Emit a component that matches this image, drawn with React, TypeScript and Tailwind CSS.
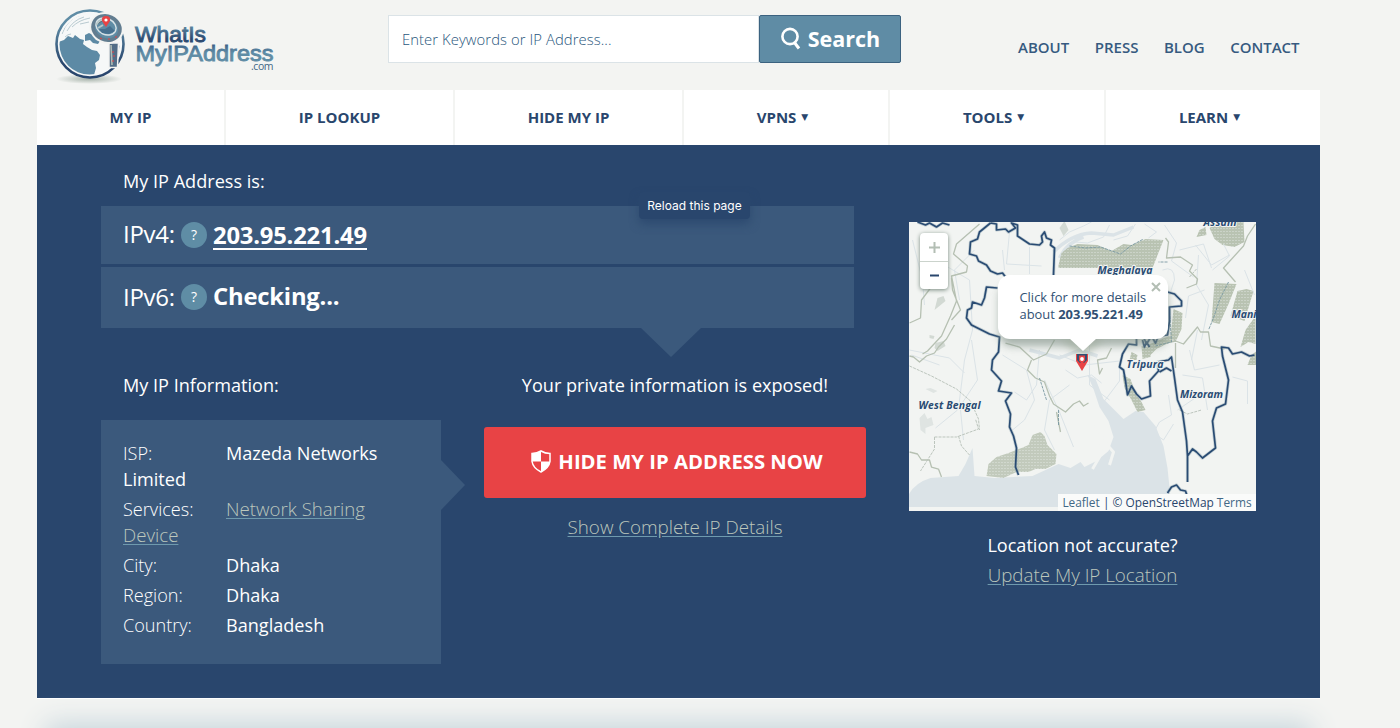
import React from "react";

const nav = [
  { label: "MY IP", cls: "w-[189px]" },
  { label: "IP LOOKUP", cls: "w-[229px]" },
  { label: "HIDE MY IP", cls: "w-[229px]" },
  { label: "VPNS", cls: "w-[206px]", arrow: true },
  { label: "TOOLS", cls: "w-[216px]", arrow: true },
  { label: "LEARN", cls: "w-[214px]", arrow: true },
];

const BORDERS = [
  "M918 222l8 3 4-2 7 4 6-4 7 2M991 223l-11 9-2 7-7 3-1 12 7 2 2 5 8 4 4 6 7 3 5-1 3 4",
  "M991 223l6 1 0 6 9-1 3 3 7-4-4-5 6 2 0 11 12 8 10 1 3-3-1-6 3-4 2 6 5 2-1 5 4 3-1 27M998 288l-11-1-2 11-3 7-9-3-1 6-4 2-1 8 5 7 18 9 10 3-1 15-6 8-1 10 10 11-3 10 13 2-6 8 5 13-1 13 4 9 3 12-1 19 3 8",
  "M1168 292l7 2 7 7 0 5-12 1v14l-2 14-9 1-3 7-4-7-5 8-3-7-7 1v7l-8-1-6 10-3 13 4 3 2 11 2 14 4-9 5 8 5 5 9-3-1-15 9-10-1-9 11-2 3-3 3 21 3 22 5 12 4 29 1 15v26",
  "M1188 456l5-7 4 3 6 6 13-10-3-27 4-13 9-4 3-24-6-24-1-9 7 1 4 6 9-2 8 4 5-1M1168 493l4-6 5-2 4 5 5 1 2 6",
  "M1143 340l2 7 2-5 3 5M1160 372l7-4 5 3",
].join("");

function Logo() {
  return (
    <svg width="240" height="90" viewBox="40 0 240 90" className="block" fontFamily="'Liberation Sans', Arial, sans-serif">
      <defs>
        <linearGradient id="ring" x1="0" y1="0" x2="0" y2="1">
          <stop offset="0.2" stopColor="#5f8ca5" />
          <stop offset="0.8" stopColor="#29466d" />
        </linearGradient>
        <linearGradient id="dark" gradientUnits="userSpaceOnUse" x1="0" y1="25" x2="0" y2="42">
          <stop offset="0" stopColor="#5f8ca5" />
          <stop offset="0.8" stopColor="#2b4a71" />
        </linearGradient>
        <linearGradient id="light" gradientUnits="userSpaceOnUse" x1="0" y1="44" x2="0" y2="62">
          <stop offset="0" stopColor="#3b5f86" />
          <stop offset="0.5" stopColor="#5f8ca5" />
        </linearGradient>
        <radialGradient id="shade">
          <stop offset="0" stopColor="#a9b5ac" />
          <stop offset="1" stopColor="#f3f4f2" />
        </radialGradient>
        <clipPath id="ball"><circle cx="89.500" cy="44.500" r="30" /></clipPath>
      </defs>
      <ellipse cx="89" cy="79" rx="33" ry="5" fill="url(#shade)" />
      <circle cx="90" cy="44" r="33.500" fill="#f6f8f8" stroke="url(#ring)" strokeWidth="2.600" />
      <g clipPath="url(#ball)">
        <path d="M58 42l6-2 4-4 5 2 2-3 5 4 4 1-1 4 4 3 5 3 5 1 3 4-1 5-4 3 1 5-2 7 1 6-37-3z" fill="#5d8aa5" />
        <path d="M85 35l4-2 4 2 3 5 4 1-2 3-5-1-3-3-5 1z" fill="#5d8aa5" />
        <path d="M113 42l7 4v18l-8 8-1-12z" fill="#5d8aa5" />
        <path d="M62 34q5-15 19-19M67 31q6-11 17-14M72 27q7-7 18-9M65 37q3-3 6-3M80 24l9-2" stroke="#b8cad0" strokeWidth="1" fill="none" />
      </g>
      <path d="M109 43h9.500l-1 24.500h-8.500z" fill="#526d87" stroke="#f3f4f2" strokeWidth="1.500" />
      <path d="M111 45l1 20" stroke="#aebbb4" strokeWidth="1.600" />
      <ellipse cx="106.500" cy="28" rx="17.500" ry="15.500" transform="rotate(25 106.500 28)" fill="#f3f4f2" />
      <ellipse cx="106.500" cy="28" rx="13.800" ry="11.800" transform="rotate(25 106.500 28)" fill="#5f8ca5" stroke="#627d90" strokeWidth="3.600" />
      <ellipse cx="106" cy="26.500" rx="10.500" ry="8" transform="rotate(25 106 26.500)" fill="none" stroke="#d9e3e7" strokeWidth="1.500" />
      <path d="M99 29l6 0 5-3 5 5-6 3-7-1z" fill="#47708f" />
      <path d="M96 25q3-5 9-6M98 28l5-3" stroke="#b7c7c8" strokeWidth="2" />
      <path d="M106 27l-4-6q-1-5 4-5t4 5z" fill="#e84345" />
      <circle cx="106" cy="20" r="1.600" fill="#fff" />
      <path d="M113 51v2m1 2v2m-1 3v2M100 38l2 1m6 0h2m5-2h2" stroke="#e84345" strokeWidth="1" />
      <g fontSize="22.800" strokeWidth="0.900">
        <text x="135" y="41.500" textLength="71" lengthAdjust="spacingAndGlyphs" fill="url(#dark)" stroke="url(#dark)">WhatIs</text>
        <text x="135.500" y="61" textLength="138" lengthAdjust="spacingAndGlyphs" fill="url(#light)" stroke="url(#light)">MyIPAddress</text>
      </g>
      <text x="251" y="70" fontSize="10.500" textLength="22.500" fill="#426886" fontFamily="'Open Sans', sans-serif">.com</text>
    </svg>
  );
}

function MapArt() {
  return (
    <svg width="347" height="289" viewBox="909.5 222 347 289" className="block" fill="none" strokeLinejoin="round">
      <defs>
        <pattern id="speck" width="3" height="3" patternUnits="userSpaceOnUse">
          <rect width="3" height="3" fill="#b9c3b2" />
          <rect width="1" height="1" fill="#dde3dd" />
        </pattern>
        <filter id="soft" x="-30%" y="-30%" width="160%" height="160%"><feGaussianBlur stdDeviation="4" /></filter>
      </defs>
      <path d="M909 222h348v289H909z" fill="#f2f4f2" />
      <path d="M909 495q6-12 22-17l28-2 7-12 7-16 2 28 20 2 38-2 26-12 12 4 10-6 4 5 12-6 12-10 5-14-5-16-9-14-6-18-6-14 8 4 8 20 12 12 8 8 12-8 8 1 12 14 8 20 4 22 4 39H909z" fill="#dbe3e7" />
      <path d="M1095 425l8 12-3 20-7 12m13-26l8 9-4 13" stroke="#f2f4f2" strokeWidth="3" />
      <path d="M1054 252q18-18 38-19l22 2 20-8M1060 258q8-16 24-21M1030 350l30 8 20-8 18 6" stroke="#dbe3e7" strokeWidth="3.500" />
      <path d="M1059 265l3-12 6-5 10-4 20 1 14 6 12-7 8 1 14-6 18 1-11 28h-94z" fill="url(#speck)" />
      <path d="M1210 228l8-6h26l1 20-10 5-12-2-8-6zM1200 230l6-3 1 8-10 2zM1215 283l22 1-8 20-9 20-8-2zM1238 291l9-2 7 2-9 30-14-5zM1246 330l10-14v28l-7-2-8 5zM1252 355l5-4v14h-9zM1174 309l9 4-1 16-6 13-5-4zM1148 345l24-10 1 6-16 8-8 8zM1142 346l9 2 0 9-8 2zM1132 352l6 3-1 5-7 0zM1123 375l8 4 5 14 6 9 4 8-8 2-6-12-7-12z" fill="url(#speck)" />
      <path d="M987 476l2-12 8-7 12-4 13-5 7-3 4-10 8-3 4 4 3 9 9 9-1 10-10 5-10 0-7 3-12 0-13 6z" fill="url(#speck)" opacity=".85" />
      <g fill="#cbd3cc" opacity=".8">
        <path d="M938 298l6-2 2 5-6 5-5 4zM930 335l5 1-1 3-4-1zM936 343l8-2 2 5-8 5-3-3zM1060 228l5-7 4 9-5 6z" />
        <path d="M920 418l5-5 3 6 4-2 2 8-8 3 0 6-5-4zM926 389l5-1 7 3-4 2z" fill="#dbe1df" />
      </g>
      <g stroke="#dbe3e7" strokeWidth="1">
        <path d="M913 240l10 40 2 25M940 235l5 30 25 15 3 50-8 30-5 40 4 40M960 300l-5-30 20-20M972 340l6 40-20 30-22 18M1003 250l2 20M1010 232l-3 32 35 2M1030 247v27M910 350l40 8 15 15M940 365l-28-10M1003 355l24 15 8 30-10 20-12 10M1040 350l-3 35-10 15-12-8M1070 385l-20 15-5 30 10 20M1045 380l15 32 14 35M1060 355l25 10 35-4 0 20-15 20M1090 345v40l20 15M1163 270q12-5 12 10l-5 15M1165 225l12 18-5 18 22 16M1199 255l-2 30 12 20-7 35M1180 250l24-6 8 24M1190 350l5 20 25-5M1183 375l20 3 5 32M1198 330l-6 30M1200 395l-22 15M1150 440l10-18 12-7-3-20M1233 377l15 4v23M1245 270l10 25M1213 270l17-14-6-12" />
        <path d="M1060 240l10-8 14-6 8-4M1076 242l12 1 16-6 6-12M1114 240l14-4 8-12M1145 224l12 8-8 6M1205 290l-16 6-3 22M1196 245l16 20 18-10M1150 430l14 10 10-16M1066 370l12 8 14-3 10 8" />
      </g>
      <g stroke="#b6c0b2" strokeWidth="1.300">
        <path d="M980 224l-23 20-3 10 14 12-1 6-15 4 5 25-6 15-9 20-14 15-5 3M931 288l-9 12-1 18-11 5M952 278l1 12 8 20-9 10M955 325l-8 14-8 8-4 6-8 3-7 6-6-5-4-1" />
        <path d="M910 452l8 2 4 6 8 0 2 7 7 2 3 8M1006 343l14 4 14 13 13-6 8-14M1032 360l-4 10 8 8 9 4 5 14 4 8 12 8 8-8 6-3 4 5 5-3M1057 412l4 20M1103 368l-3 6-2-14 9-2 5-10M1166 238l3 4-2 16 14-1 12 8-3 6 8 8-1 5-10 4M1256 224l-8 12-4 10-20 22 12 14M1166 343l10-2 8 3 14-17 3 5 8 0 2 14 14 3M1176 343v25" />
      </g>
      <path d="M910 366l22 10 25 13 14 12 8 18 1 11M935 437h22l22-8-3-10M935 437v12l-14 22M959 436l3 10 8 9M1190 277l7-8M1180 410l8 4 14-4" stroke="#bcc5bd" strokeWidth="1" strokeDasharray="3 1" />
      <g stroke="#7897a2" strokeWidth=".9" strokeDasharray="3 1">
        <path d="M1070 246l16 2 15-1 20 7 10-8 13-7M1229 282l-9 18-6 18-5 12M1170 312l2 30-16 4M1040 378l7 22M1059 410v15M1168 262h-9" />
      </g>
      <path d={BORDERS} stroke="#7f99a4" strokeWidth="3.200" opacity=".4" />
      <path d={BORDERS} stroke="#294b73" strokeWidth="1.700" />
      <g fill="#294b73" stroke="#f2f4f2" strokeWidth="2" paintOrder="stroke" fontFamily="'Open Sans', sans-serif" fontSize="10.500" fontWeight="700" fontStyle="italic">
        <text x="1204" y="226" textLength="33">Assam</text>
        <text x="1098" y="274" textLength="55">Meghalaya</text>
        <text x="1232" y="318">Mani</text>
        <text x="1127" y="368" textLength="37">Tripura</text>
        <text x="1180.500" y="398" textLength="43">Mizoram</text>
        <text x="919" y="409" textLength="62">West Bengal</text>
      </g>
      <rect x="1000" y="284" width="168" height="62" rx="12" fill="#7f9086" opacity=".65" filter="url(#soft)" />
      <path d="M1060 338h45l-22 20z" fill="#9aa797" opacity=".6" filter="url(#soft)" />
      <path d="M1082.500 371l-6-10v-7h12v7z" fill="#e84345" />
      <path d="M1077.500 354h10v6l-3 3h-4l-3-3z" fill="#315073" />
      <path d="M1079.500 355.500h6v5l-3 4-3-4z" fill="#e84345" />
      <circle cx="1082.500" cy="359" r="1.900" fill="#fff" />
    </svg>
  );
}

function InfoRow({ label, first, rest, link }: { label: string; first: string; rest?: string; link?: boolean }) {
  const tone = link ? "text-[18.7px] font-light text-[#bcc7bc] underline decoration-[#6f9aae] underline-offset-2" : "";
  return (
    <div className="mb-[4px] leading-[26px]">
      <div className="flex">
        <span className="w-[103px] font-light">{label}</span>
        <span className={tone}>{first}</span>
      </div>
      {rest && <div className={tone}>{rest}</div>}
    </div>
  );
}

function IpRow({ label, children }: { label: string; children: React.ReactNode }) {
  return (
    <div className="flex items-center bg-[#3b597c] pb-px pl-[22px] text-[23.8px] leading-none tracking-[-0.2px] text-white">
      <span className="w-[58px] whitespace-nowrap pb-px text-[24px] tracking-[-0.3px]">{label}</span>
      <span className="mr-[6px] flex h-[26px] w-[26px] items-center justify-center rounded-full bg-[#5f8da5] text-[14px]">?</span>
      {children}
    </div>
  );
}

export default function App() {
  return (
    <div className="relative h-[728px] w-[1400px] overflow-hidden bg-[#f3f4f2] font-['Open_Sans','Noto_Sans',sans-serif] text-[#29466d]">
      <header className="flex h-[90px] items-start pl-[40px]">
        <Logo />
        <div className="ml-[108px] mt-[15px] flex h-[48px] w-[513px]">
          <div className="flex w-[371px] items-center border border-[#dbe3e7] bg-white pl-[13px] text-[14.8px] font-light tracking-[0.08px] text-[#29567c]">Enter Keywords or IP Address...</div>
          <button className="flex flex-1 items-center justify-center gap-[6px] rounded-[2px] border border-[#3b6280] bg-[#5f8ca5] text-[21.5px] font-bold text-white">
            <svg width="22" height="24" viewBox="0 0 22 24" fill="none" stroke="white" strokeWidth="2.600"><circle cx="10" cy="9.500" r="7.600" /><path d="M14 15l5 6.500" strokeWidth="3" /></svg>
            <span>Search</span>
          </button>
        </div>
        <div className="ml-[117px] mt-[37px] flex gap-[25.5px] text-[15px] font-semibold leading-[20px] text-[#365a80]">
          <span>ABOUT</span><span>PRESS</span><span>BLOG</span><span>CONTACT</span>
        </div>
      </header>

      <nav className="ml-[37px] flex h-[55px] w-[1283px] bg-white text-[15px] font-bold">
        {nav.map((n) => (
          <div key={n.label} className={`flex items-center justify-center gap-[5px] border-r-2 border-[#f3f4f2] last:border-r-0 ${n.cls}`}>
            <span>{n.label}</span>
            {n.arrow && <span className="mr-[7px] font-['DejaVu_Sans'] text-[9px] leading-none">▼</span>}
          </div>
        ))}
      </nav>

      <main className="ml-[37px] flex h-[553px] w-[1283px] bg-[#29466d] pl-[64px] text-[18.1px] text-white">
        <section className="w-[808px]">
          <h2 className="ml-[22px] flex h-[61px] items-start pt-[23px] leading-[26px]">My IP Address is:</h2>
          <div className="relative grid h-[122px] w-[753px] grid-rows-[58px_61px] gap-[3px]">
            <IpRow label="IPv4:"><b className="mt-[3px] border-b-2 border-white leading-[25px]">203.95.221.49</b></IpRow>
            <IpRow label="IPv6:"><b className="mb-px">Checking...</b></IpRow>
            <div className="absolute left-[538px] top-[-14px] flex h-[27px] w-[111px] items-center justify-center rounded-[4px] bg-[#29466d] font-['Inter'] text-[12px] shadow-[0_5px_10px_#29466dcc]">Reload this page</div>
            <svg width="60" height="29" className="absolute left-[540px] top-[122px]"><path d="M0 0h60L30 29z" fill="#3b597c" /></svg>
          </div>
          <div className="flex pt-[43px]">
            <div className="w-[340px]">
              <h2 className="ml-[22px] h-[49px] leading-[28px]">My IP Information:</h2>
              <div className="relative h-[244px] bg-[#3b597c] pl-[22px] pt-[20px]">
                <InfoRow label="ISP:" first="Mazeda Networks" rest="Limited" />
                <InfoRow label="Services:" first="Network Sharing" rest="Device" link />
                <InfoRow label="City:" first="Dhaka" />
                <InfoRow label="Region:" first="Dhaka" />
                <InfoRow label="Country:" first="Bangladesh" />
                <svg width="25" height="50" className="absolute left-[340px] top-[40px]"><path d="M0 0l24 25L0 50z" fill="#3b597c" /></svg>
              </div>
            </div>
            <div className="ml-[43px] flex w-[382px] flex-col items-center">
              <h2 className="leading-[28px]">Your private information is exposed!</h2>
              <button className="mt-[28px] flex h-[71px] w-full items-center justify-center gap-[7px] rounded-[3px] bg-[#e84345] pb-[2px] pl-[4px] text-[20.3px] font-bold">
                <svg width="20" height="23" viewBox="0 0 20 23"><path d="M10 1q4 2.500 9 2.500v8Q18 18 10 22 2 18 1 11.500v-8Q6 3.500 10 1z" fill="none" stroke="#fff" strokeWidth="1.500" /><path d="M10 1v10.500H1v-8Q6 3.500 10 1zM10 11.500h9Q18 18 10 22z" fill="#fff" /></svg>
                <span>HIDE MY IP ADDRESS NOW</span>
              </button>
              <a className="mt-[16px] text-[18.8px] font-light leading-[26px] text-[#bcc7bc] underline decoration-[#6f9aae] underline-offset-2">Show Complete IP Details</a>
            </div>
          </div>
        </section>
        <aside className="flex w-[347px] flex-col items-center pt-[77px]">
          <div className="relative h-[289px] w-[347px] overflow-hidden bg-[#f2f4f2]">
            <MapArt />
            <div className="absolute left-[11px] top-[11px] flex h-[56px] w-[28px] flex-col rounded-[4px] bg-white text-center shadow-[0_1px_4px_#75877c]">
              <svg width="28" height="56"><path d="M14.500 9v11M9 14.500h11" stroke="#b3beb4" strokeWidth="2" /><path d="M0 28.500h28" stroke="#cbd3cc" /><path d="M10 42.500h9" stroke="#29466d" strokeWidth="2" /></svg>
            </div>
            <div className="absolute left-[89px] top-[53px] h-[64px] w-[170px] rounded-[12px] bg-white pl-[21.5px] pt-[14px] text-[12.9px] leading-[17px] text-[#315073]">
              <div>Click for more details</div>
              <div>about <b>203.95.221.49</b></div>
              <svg width="10" height="10" className="absolute right-[7px] top-[7px]"><path d="M1 1l8 8M9 1L1 9" stroke="#b3beb4" strokeWidth="2" /></svg>
              <svg width="28" height="14" className="absolute left-[71px] top-[63px]"><path d="M0 0h28L14 13z" fill="white" /></svg>
            </div>
            <div className="absolute bottom-0 right-0 flex h-[17px] w-[198px] items-center justify-center whitespace-pre bg-[#fafbfa] text-[11.9px] text-[#29466d]"><span className="text-[#426886]">Leaflet</span> | © OpenStreetMap <span className="text-[#426886]">Terms</span></div>
          </div>
          <div className="mt-[21px] leading-[26px]">Location not accurate?</div>
          <a className="mt-[4px] text-[18.8px] font-light leading-[26px] text-[#bcc7bc] underline decoration-[#6f9aae] underline-offset-2">Update My IP Location</a>
        </aside>
      </main>
      <div className="ml-[37px] h-px w-[1283px] bg-white" />
      <div className="absolute left-[60px] top-[738px] h-[30px] w-[1237px] shadow-[0_0_28px_14px_#c5d4db]" />
    </div>
  );
}
